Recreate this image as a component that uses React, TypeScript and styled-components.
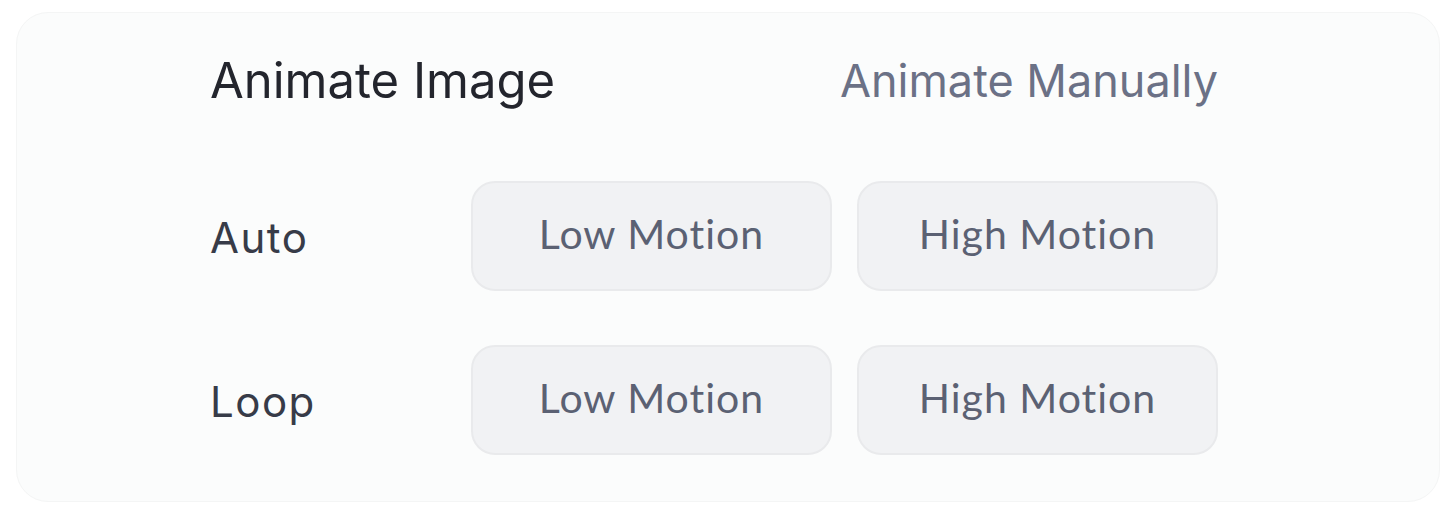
import { Fragment } from 'react';
import styled, { createGlobalStyle } from 'styled-components';

const GlobalStyle = createGlobalStyle`
  html, body {
    margin: 0;
    background: #ffffff;
    font-family: Inter, "Noto Sans", sans-serif;
  }
`;

const Page = styled.div`
  padding: 12px 16px;
`;

const Card = styled.section`
  box-sizing: border-box;
  height: 490px;
  padding: 37px 221px 0 193px;
  background: #fbfcfc;
  border: 1px solid #f4f5f5;
  border-radius: 32px;
`;

const Header = styled.header`
  display: flex;
  align-items: center;
  justify-content: space-between;
  height: 60px;
  margin-bottom: 71px;
`;

const Title = styled.h2<{ $muted?: boolean }>`
  margin: 0;
  font-size: ${({ $muted }) => ($muted ? '45px' : '49px')};
  font-weight: 400;
  color: ${({ $muted }) => ($muted ? '#6b7186' : '#23252d')};
  white-space: nowrap;
`;

const Grid = styled.div`
  display: grid;
  grid-template-columns: 236px 361px 361px;
  grid-auto-rows: 110px;
  column-gap: 25px;
  row-gap: 54px;
  align-items: center;
`;

const RowLabel = styled.span`
  font-size: 42px;
  letter-spacing: 1.5px;
  color: #373b48;
  padding-top: 3px;
`;

const MotionButton = styled.button`
  height: 110px;
  padding: 0 0 6px;
  border: 2px solid #e9eaec;
  border-radius: 24px;
  background: #f1f2f4;
  color: #5b6173;
  font-family: Lato, Inter, sans-serif;
  font-size: 41px;
  letter-spacing: 1px;
  cursor: pointer;
`;

const rows = ['Auto', 'Loop'];

export default function App() {
  return (
    <>
      <GlobalStyle />
      <Page>
        <Card>
          <Header>
            <Title>Animate Image</Title>
            <Title $muted>Animate Manually</Title>
          </Header>
          <Grid>
            {rows.map((row) => (
              <Fragment key={row}>
                <RowLabel>{row}</RowLabel>
                <MotionButton>Low Motion</MotionButton>
                <MotionButton>High Motion</MotionButton>
              </Fragment>
            ))}
          </Grid>
        </Card>
      </Page>
    </>
  );
}
